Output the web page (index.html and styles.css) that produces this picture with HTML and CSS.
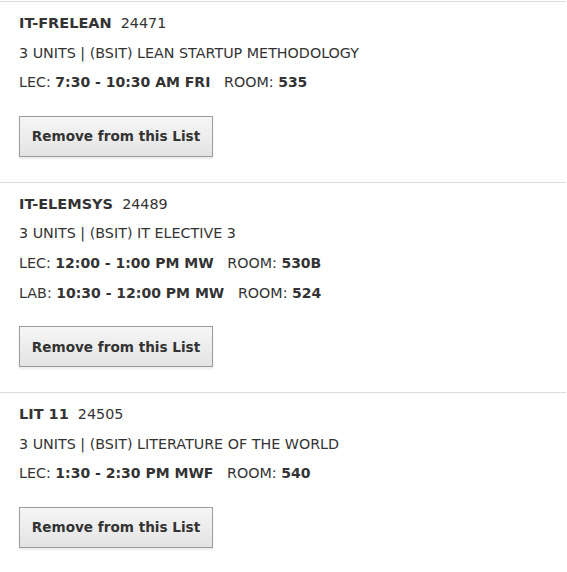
FILE: index.html
```html
<!DOCTYPE html>
<html>
<head>
<meta charset="utf-8">
<link rel="stylesheet" href="styles.css">
</head>
<body>
<div class="list">
  <section class="course">
    <p class="line"><b class="code">IT-FRELEAN</b>&nbsp; 24471</p>
    <p class="line">3 UNITS | (BSIT) LEAN STARTUP METHODOLOGY</p>
    <p class="line">LEC: <b>7:30 - 10:30 AM FRI</b>&nbsp;&nbsp; ROOM: <b>535</b></p>
    <button class="btn">Remove from this List</button>
  </section>
  <section class="course">
    <p class="line"><b class="code">IT-ELEMSYS</b>&nbsp; 24489</p>
    <p class="line">3 UNITS | (BSIT) IT ELECTIVE 3</p>
    <p class="line">LEC: <b>12:00 - 1:00 PM MW</b>&nbsp;&nbsp; ROOM: <b>530B</b></p>
    <p class="line">LAB: <b>10:30 - 12:00 PM MW</b>&nbsp;&nbsp; ROOM: <b>524</b></p>
    <button class="btn">Remove from this List</button>
  </section>
  <section class="course">
    <p class="line"><b class="code">LIT 11</b>&nbsp; 24505</p>
    <p class="line">3 UNITS | (BSIT) LITERATURE OF THE WORLD</p>
    <p class="line">LEC: <b>1:30 - 2:30 PM MWF</b>&nbsp;&nbsp; ROOM: <b>540</b></p>
    <button class="btn">Remove from this List</button>
  </section>
</div>
</body>
</html>
```
FILE: styles.css
```css
html, body {
  margin: 0;
  padding: 0;
  background: #fff;
}
body {
  font-family: "DejaVu Sans", Verdana, sans-serif;
  font-size: 14.3px;
  color: #333;
}
.list {
  width: 566px;
  padding-top: 1px;
}
.course {
  border-top: 1px solid #ddd;
  padding: 11px 19px 24.7px;
}
.line {
  margin: 0 0 9.7px;
  line-height: 20px;
}
.line b {
  font-weight: bold;
  font-size: 14px;
}
.line b.code {
  font-size: 14.5px;
}
.btn {
  display: block;
  margin-top: 23.6px;
  height: 41px;
  width: 194px;
  padding: 0;
  font-family: inherit;
  font-size: 13.6px;
  font-weight: bold;
  color: #333;
  background: linear-gradient(#f6f6f6, #e3e3e3);
  border: 1px solid #9c9c9c;
  border-radius: 0;
  box-shadow: 0 2px 2px rgba(0,0,0,0.08);
}
```
